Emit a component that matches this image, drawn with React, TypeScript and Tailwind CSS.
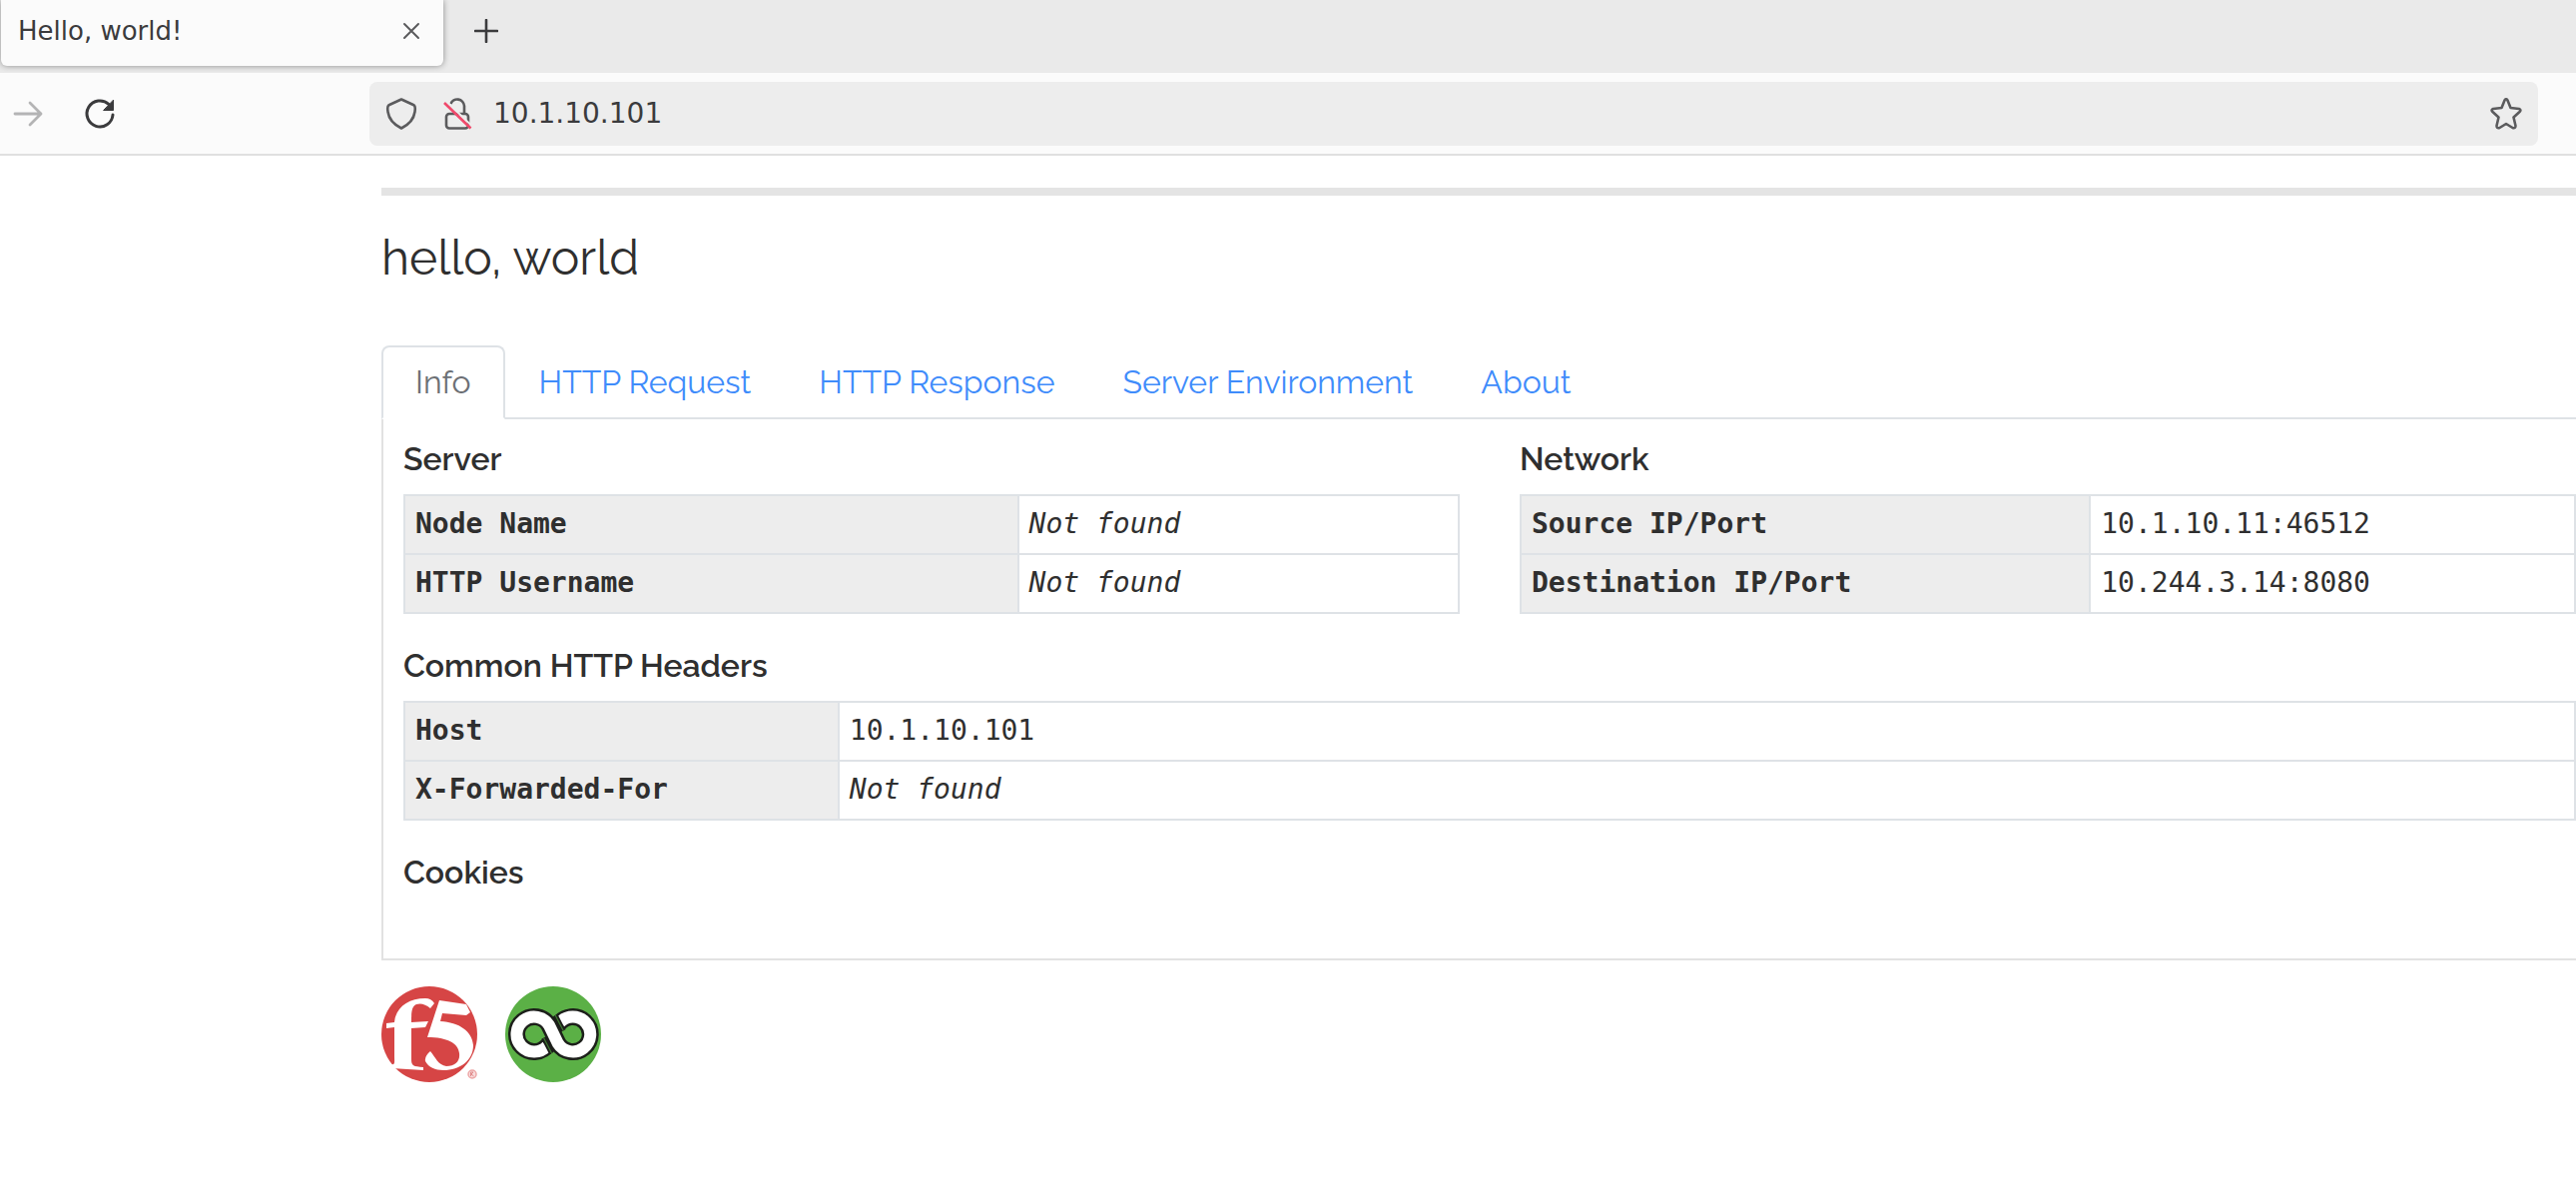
import React from "react";

type Row = { label: string; value?: string };

const TABS = ["HTTP Request", "HTTP Response", "Server Environment", "About"];

function InfoTable({ title, rows, labelWidth }: { title: string; rows: Row[]; labelWidth: string }) {
  return (
    <section>
      <h2 className="text-[32px] leading-10 font-semibold">{title}</h2>
      <table aria-label={title} className="mt-[15px] w-full table-fixed border-collapse font-['DejaVu_Sans_Mono',monospace] text-[28px] leading-[42px]">
        <tbody>
          {rows.map((row) => (
            <tr key={row.label}>
              <th scope="row" className={`${labelWidth} border-2 border-[#dee2e6] bg-[#ededed] px-[10px] pt-[7px] pb-2 text-left font-bold`}>
                {row.label}
              </th>
              <td className="border-2 border-[#dee2e6] px-[10px] pt-[7px] pb-2">{row.value ?? <em>Not found</em>}</td>
            </tr>
          ))}
        </tbody>
      </table>
    </section>
  );
}

function BrowserChrome() {
  return (
    <header className="font-['DejaVu_Sans',sans-serif] text-[#3b3b3d]">
      <div className="flex h-[73px] bg-[#eaeaea]">
        <div className="ml-px flex h-[66px] w-[443px] items-center justify-between rounded-b-md bg-[#fbfbfb] pr-[22px] pb-1 pl-[17px] shadow-[0_0_6px_rgba(0,0,0,0.4)]">
          <span className="text-[26px] leading-8">Hello, world!</span>
          <button aria-label="Close tab" className="size-5">
            <svg viewBox="0 0 20 20" className="size-5" fill="none" stroke="#5b5b5d" strokeWidth="2" strokeLinecap="round">
              <path d="M3 3 17 17M17 3 3 17" />
            </svg>
          </button>
        </div>
        <button aria-label="New tab" className="mt-[19px] ml-[31px] size-6">
          <svg viewBox="0 0 24 24" className="size-6" fill="none" stroke="currentColor" strokeWidth="2.6" strokeLinecap="round">
            <path d="M12 1V23M1 12H23" />
          </svg>
        </button>
      </div>
      <div className="flex h-[83px] items-center border-b-2 border-[#e0e0e0] bg-[#fbfbfb] pr-[38px] pl-3">
        <button aria-label="Forward" disabled className="size-8 text-[#b4b4b5]">
          <svg viewBox="0 0 32 32" className="size-8" fill="none" stroke="currentColor" strokeWidth="2.8" strokeLinecap="round" strokeLinejoin="round">
            <path d="M3 16H29M18 5 29 16 18 27" />
          </svg>
        </button>
        <button aria-label="Reload" className="ml-10 size-8">
          <svg viewBox="0 0 32 32" className="size-8" fill="none" stroke="currentColor" strokeWidth="3" strokeLinecap="round">
            <path d="M29 17A13 13 0 1 1 25 6.500" />
            <path d="M29.500 2.500V12.500H20Z" fill="currentColor" strokeWidth="1" strokeLinejoin="round" />
          </svg>
        </button>
        <div className="ml-[254px] flex h-16 flex-1 items-center rounded-lg bg-[#ededed] pr-4 pl-4">
          <svg viewBox="0 0 32 32" className="size-8" fill="none" stroke="#5b5b5d" strokeWidth="2.6" strokeLinejoin="round">
            <path d="M16 1.500 28 7C30.500 8 30 11 29.500 14C28.500 21 23 27 16 30.500C9 27 3.500 21 2.500 14C2 11 1.500 8 4 7Z" />
          </svg>
          <svg viewBox="0 0 32 32" className="ml-6 size-8" fill="none" stroke="#5b5b5d" strokeWidth="2.6">
            <rect x="5" y="16" width="22" height="14.500" rx="3" />
            <path d="M9.500 6A7 7 0 0 1 23 8V16" />
            <path d="M5 3.500 31 28.500" stroke="#ededed" strokeWidth="2" />
            <path d="M3 5 29.500 30.500" stroke="#f0496b" />
          </svg>
          <input aria-label="Address" defaultValue="10.1.10.101" className="ml-5 min-w-0 flex-1 bg-transparent text-[28px] leading-8 outline-none" />
          <button aria-label="Bookmark this page" className="size-8 text-[#5b5b5d]">
            <svg viewBox="0 0 32 32" className="size-8" fill="none" stroke="currentColor" strokeWidth="2.6" strokeLinejoin="round">
              <path d="M14.500 2.500Q16 0 17.500 2.500L20.500 10L29 11Q31.500 12 29.500 14L23.500 19.500L25.500 28Q25.500 31 22.500 30L16 26L9.500 30Q6.500 31 6.500 28L8.500 19.500L2.500 14Q.5 12 3 11L11.500 10Z" />
            </svg>
          </button>
        </div>
      </div>
    </header>
  );
}

function F5Logo() {
  return (
    <svg viewBox="0 0 96 96" className="size-24" role="img" aria-label="F5">
      <circle cx="48" cy="48" r="48" fill="#d64545" />
      <path fill="#fff" d="M5 37 13 36C14 22 26 12 44 12Q50 12 53 17L49 22Q42 16 35 18C30 20 30 27 30 36L47 35 44 41 30 42V73C30 80 32 80 42 81V84L10 82V78C14 79 13 75 13 70V41L5 42Z" />
      <path fill="#fff" d="M58 14 85 18 89 26 85 29 61 27 59 35C78 36 91 45 92 59C92 74 79 84 62 84C54 84 47 81 44 75Q43 70 49 65C54 71 57 79 65 80C74 80 79 75 78 67C77 57 66 51 46 51Z" />
      <circle cx="91" cy="88" r="4" fill="#f8dcdc" stroke="#eda6a6" strokeWidth="1.500" />
      <path d="M89.500 90V86H92L90 88 92.500 90" fill="none" stroke="#e08a8a" />
    </svg>
  );
}

function LoopLogo() {
  return (
    <svg viewBox="0 0 96 96" className="size-24" role="img" aria-label="Loop" fill="none">
      <circle cx="48" cy="48" r="48" fill="#5bb046" />
      <path
        d="M43.300 58A17.500 17.500 0 1 1 43.800 38.700L52.900 57.300A17.500 17.500 0 1 0 53.400 38"
        stroke="#1c1f1a"
        strokeWidth="17"
        strokeLinejoin="round"
      />
      <path
        d="M42 59.700A17.500 17.500 0 1 1 43.800 38.700L52.900 57.300A17.500 17.500 0 1 0 54.700 36.300"
        stroke="#fff"
        strokeWidth="12"
        strokeLinejoin="round"
      />
      <path d="M38.500 51.500 46.500 67M58.200 44.500 50.200 29" stroke="#1c1f1a" strokeWidth="5" />
      <path d="M38.500 51.500 46.500 67M58.200 44.500 50.200 29" stroke="#3f7a31" strokeWidth="1.200" />
    </svg>
  );
}

export default function App() {
  return (
    <div className="min-h-screen overflow-x-hidden bg-white">
      <BrowserChrome />
      <main className="mt-8 ml-[382px] border-t-8 border-[#e4e4e4] font-['Raleway',Lato,sans-serif] text-[#2f2f2f]">
        <h1 className="mt-8 text-[48px] leading-[60px]">hello, world</h1>
        <nav className="mt-[58px] flex border-b-2 border-[#dee2e6] text-[32px] leading-[46px]">
          <a href="#info" aria-current="page" className="-mb-0.5 rounded-t-lg border-2 border-[#dee2e6] border-b-white bg-white px-8 pt-3 pb-3 text-[#6c7075]">
            Info
          </a>
          {TABS.map((tab) => (
            <a key={tab} href="#tab" className="border-2 border-b-0 border-transparent px-8 pt-3 pb-3 text-[#3f8cfb]">
              {tab}
            </a>
          ))}
        </nav>
        <div className="border-b-2 border-l-2 border-[#e2e2e2] pt-5 pl-5">
          <div className="grid grid-cols-2 gap-15">
            <InfoTable title="Server" labelWidth="w-[58.2%]" rows={[{ label: "Node Name" }, { label: "HTTP Username" }]} />
            <InfoTable
              title="Network"
              labelWidth="w-[54%]"
              rows={[
                { label: "Source IP/Port", value: "10.1.10.11:46512" },
                { label: "Destination IP/Port", value: "10.244.3.14:8080" },
              ]}
            />
          </div>
          <div className="mt-8">
            <InfoTable title="Common HTTP Headers" labelWidth="w-1/5" rows={[{ label: "Host", value: "10.1.10.101" }, { label: "X-Forwarded-For" }]} />
          </div>
          <h2 className="mt-8 mb-[66px] text-[32px] leading-10 font-semibold">Cookies</h2>
        </div>
        <footer className="mt-[26px] flex gap-7">
          <F5Logo />
          <LoopLogo />
        </footer>
      </main>
    </div>
  );
}
